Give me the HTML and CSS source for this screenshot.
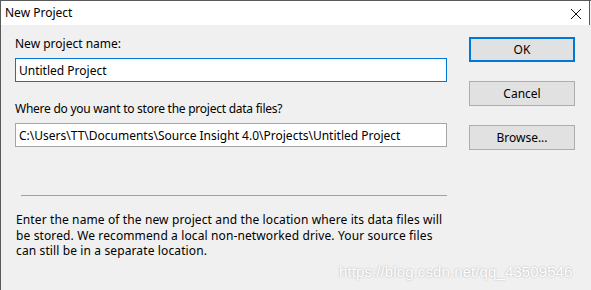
FILE: index.html
```html
<!DOCTYPE html>
<html lang="en">
<head>
    <meta charset="UTF-8">
    <meta name="viewport" content="width=device-width, initial-scale=1.0">
    <title>New Project</title>
    <link rel="stylesheet" href="styles.css">
</head>
<body>
    <div class="window">
        <div class="titlebar">
            <span class="title">New Project</span>
            <svg class="close-icon" width="10" height="10" viewBox="0 0 10 10">
                <path d="M0 0L10 10M10 0L0 10" stroke="#111" stroke-width="1" fill="none"/>
            </svg>
        </div>
        <div class="dialog-body">
            <div class="fields">
                <label class="field-label" for="projectName">New project name:</label>
                <input type="text" id="projectName" class="text-input focused" value="Untitled Project">

                <label class="field-label second" for="projectPath">Where do you want to store the project data files?</label>
                <input type="text" id="projectPath" class="text-input" value="C:\Users\TT\Documents\Source Insight 4.0\Projects\Untitled Project">

                <div class="separator"></div>

                <p class="help-text">
                    Enter the name of the new project and the location where its data files will<br>
                    be stored. We recommend a local non-networked drive. Your source files<br>
                    can still be in a separate location.
                </p>
            </div>
            <div class="buttons">
                <button class="btn default">OK</button>
                <button class="btn">Cancel</button>
                <button class="btn">Browse...</button>
            </div>
        </div>
        <div class="watermark">https://blog.csdn.net/qq_43509546</div>
    </div>
</body>
</html>
```

FILE: styles.css
```css
:root {
    --win-border: #5a5a5a;
    --win-face: #f0f0f0;
    --win-blue: #0078d7;
    --btn-face: #e1e1e1;
    --btn-border: #adadad;
    --input-border: #a5a5a5;
    --text: #000000;
}

html, body {
    margin: 0;
    padding: 0;
}

body {
    font-family: 'Noto Sans', 'Open Sans', Arial, sans-serif;
    font-size: 12px;
    color: var(--text);
    background-color: var(--win-face);
}

.window {
    position: relative;
    width: 591px;
    height: 290px;
    box-sizing: border-box;
    border-left: 1px solid var(--win-border);
    border-top: 1px solid var(--win-border);
    background-color: var(--win-face);
    overflow: hidden;
}

.titlebar {
    display: flex;
    align-items: center;
    justify-content: space-between;
    height: 24px;
    margin-right: 1px;
    padding: 0 8px 0 4px;
    background-color: white;
    border-right: 1px solid var(--win-border);
}

.title {
    font-size: 12px;
    line-height: 16px;
}

.close-icon {
    display: block;
    margin-top: 1px;
}

.dialog-body {
    display: flex;
    gap: 22px;
    padding: 11px 0 0 14px;
}

.fields {
    width: 432px;
}

.field-label {
    display: block;
    line-height: 16px;
}

.field-label.second {
    margin-top: 19px;
    letter-spacing: -0.25px;
}

.text-input {
    display: block;
    width: 100%;
    height: 24px;
    box-sizing: border-box;
    margin-top: 6px;
    padding: 0 3px;
    border: 1px solid var(--input-border);
    background-color: white;
    font-family: inherit;
    font-size: 12px;
    color: var(--text);
    outline: none;
}

.text-input.focused {
    border-color: var(--win-blue);
}

.separator {
    margin: 48px 0 0 6px;
    height: 1px;
    background-color: #a0a0a0;
}

.help-text {
    margin: 16px 0 0 1px;
    line-height: 15.5px;
    letter-spacing: 0.12px;
}

.buttons {
    display: flex;
    flex-direction: column;
    gap: 19px;
    padding-top: 1px;
}

.btn {
    width: 106px;
    height: 25px;
    box-sizing: border-box;
    border: 1px solid var(--btn-border);
    background-color: var(--btn-face);
    font-family: inherit;
    font-size: 12px;
    color: var(--text);
    padding: 0;
}

.btn.default {
    border: 2px solid var(--win-blue);
}

.watermark {
    position: absolute;
    left: 338px;
    top: 262px;
    font-family: 'Liberation Sans', Arial, sans-serif;
    font-size: 15px;
    letter-spacing: 0.1px;
    color: #ffffff;
    text-shadow: 0 0 2px rgba(0, 0, 0, 0.3);
    white-space: nowrap;
}
```
